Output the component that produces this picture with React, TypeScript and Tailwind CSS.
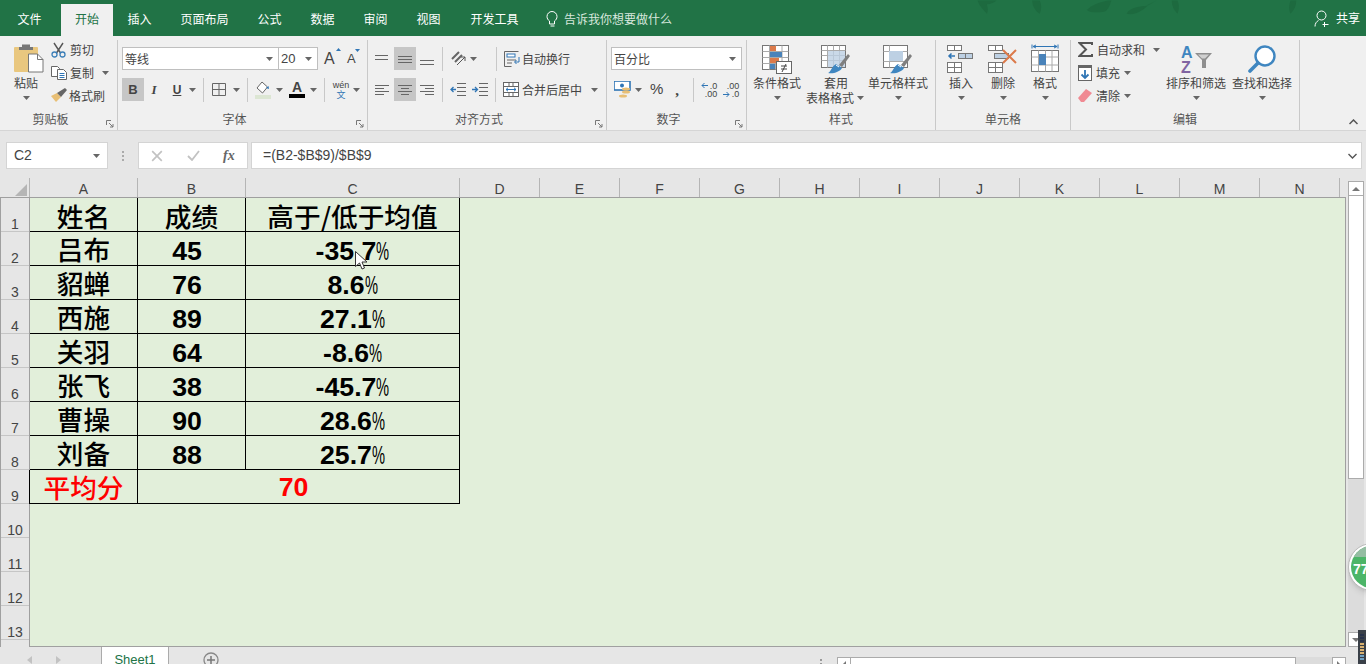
import type { ReactNode } from 'react';

const CJK = "font-['Noto_Sans_CJK_SC','Liberation_Sans',sans-serif]";

const Caret = ({ className = '' }: { className?: string }) => (
  <svg width="7" height="4" viewBox="0 0 7 4" className={className}>
    <path d="M0 0h7L3.5 4z" fill="#666" />
  </svg>
);

const VSep = ({ className = '' }: { className?: string }) => (
  <div className={`w-px h-[24px] bg-[#c8c8c8] ${className}`} />
);

const Lines = ({ rows, w = 14 }: { rows: number[][]; w?: number }) => (
  <svg width={w} height="14" viewBox={`0 0 ${w} 14`}>
    {rows.map((r, i) => (
      <path key={i} d={`M${r[0]} ${r[2]}H${r[1]}`} stroke="#666" strokeWidth="1" />
    ))}
  </svg>
);

function Group({ w, label, launcher, children }: { w: string; label: string; launcher?: boolean; children: ReactNode }) {
  return (
    <div className={`${w} relative shrink-0 h-[90px] border-r border-[#c9c9c9] flex flex-col`}>
      <div className="flex-1 min-h-0">{children}</div>
      <div className={`h-[16px] mb-[3px] text-center text-[12px] leading-[16px] text-[#555] ${launcher ? 'pr-[16px]' : ''}`}>{label}</div>
      {launcher && (
        <svg width="8" height="8" viewBox="0 0 8 8" className="absolute right-[3px] bottom-[2px]">
          <path d="M0.5 5V0.5H5M3 3l4 4M7 4v3H4" fill="none" stroke="#777" />
        </svg>
      )}
    </div>
  );
}

function BigButton({ lines, icon, className = '' }: { lines: string[]; icon: ReactNode; className?: string }) {
  return (
    <div className={`flex flex-col items-center shrink-0 ${className}`}>
      <div className="h-[32px] flex items-center justify-center">{icon}</div>
      <div className="text-[12px] leading-[15px] text-[#444] text-center whitespace-nowrap">
        {lines.map((l) => (
          <div key={l}>{l}</div>
        ))}
      </div>
      {lines.length === 1 && <Caret className="mt-[6px]" />}
    </div>
  );
}

const PasteIcon = () => (
  <svg width="30" height="32" viewBox="0 0 30 32">
    <rect x="0" y="4" width="24" height="25" rx="1" fill="#e9c77f" />
    <path d="M8 4V1.5h8V4h3v3H5V4z" fill="#777" />
    <path d="M14.5 11h9l5.5 5.5V29H14.5z" fill="#fff" stroke="#777" />
    <path d="M23.5 11v5.5H29" fill="none" stroke="#777" />
  </svg>
);

const ScissorsIcon = () => (
  <svg width="15" height="16" viewBox="0 0 15 16">
    <path d="M3 1l6.5 10M12 1L5.5 11" stroke="#555" strokeWidth="1.4" fill="none" />
    <circle cx="3.5" cy="12.5" r="2.5" fill="none" stroke="#3c7fb8" strokeWidth="1.3" />
    <circle cx="11.5" cy="12.5" r="2.5" fill="none" stroke="#3c7fb8" strokeWidth="1.3" />
  </svg>
);

const CopyIcon = () => (
  <svg width="16" height="14" viewBox="0 0 16 14">
    <path d="M.5.5h6l2 2v8H.5z" fill="#fff" stroke="#666" />
    <path d="M6.5 3.5h6l3 3v7h-9z" fill="#fff" stroke="#666" />
    <path d="M8.5 7.5h5M8.5 9.5h5M8.5 11.5h5" stroke="#2f75b5" />
  </svg>
);

const BrushIcon = () => (
  <svg width="17" height="15" viewBox="0 0 17 15">
    <path d="M0 8l5 6 5-5-4-4z" fill="#e8bf75" />
    <path d="M6 5l4 4 6-7-2-2z" fill="#666" />
  </svg>
);

const FillIcon = () => (
  <svg width="17" height="18" viewBox="0 0 17 18">
    <path d="M2 7l5-6 5.5 5-5 6z" fill="#fff" stroke="#666" />
    <path d="M11 7l2.5-2 .5 3z" fill="#2f75b5" />
    <rect x="0" y="14" width="16" height="4" fill="#dce6d3" />
  </svg>
);

const WrapIcon = () => (
  <svg width="16" height="16" viewBox="0 0 16 16">
    <path d="M.5.5h14M.5 15.5h7M.5.5v15" stroke="#666" fill="none" />
    <rect x="3" y="3" width="8" height="3" fill="#fff" stroke="#2f75b5" />
    <path d="M3 9h9M3 12h5" stroke="#666" />
    <path d="M15 6v5h-4M12.5 9l-2 2 2 2" stroke="#2f75b5" fill="none" />
  </svg>
);

const MergeIcon = () => (
  <svg width="16" height="15" viewBox="0 0 16 15">
    <rect x=".5" y=".5" width="15" height="14" fill="#fff" stroke="#666" />
    <path d="M.5 4.5h15M.5 10.5h15M6 .5v4M10 .5v4M6 10.5v4M10 10.5v4" stroke="#666" />
    <path d="M3 7.5h10M5 5.8L3 7.5l2 1.7M11 5.8l2 1.7-2 1.7" stroke="#2f75b5" fill="none" />
  </svg>
);

const OrientIcon = () => (
  <svg width="16" height="16" viewBox="0 0 16 16">
    <path d="M1 8l7-7M4 11l7-7" stroke="#666" strokeWidth="2" />
    <path d="M6 14l8-8M14 6v4M14 6h-4" stroke="#555" fill="none" />
  </svg>
);

const IndentIcon = ({ flip }: { flip?: boolean }) => (
  <svg width="16" height="13" viewBox="0 0 16 13">
    <path d="M7 .5h9M7 4.5h9M7 8.5h9M7 12.5h9" stroke="#666" />
    {flip ? (
      <path d="M0 6.5h5M3 4l2.5 2.5L3 9" stroke="#2f75b5" strokeWidth="1.3" fill="none" />
    ) : (
      <path d="M1 6.5h5M3.5 4L1 6.5 3.5 9" stroke="#2f75b5" strokeWidth="1.3" fill="none" />
    )}
  </svg>
);

const CurrencyIcon = () => (
  <svg width="17" height="17" viewBox="0 0 17 17">
    <rect x="0" y="0" width="16" height="9" fill="#fff" stroke="#2f75b5" strokeWidth="1.6" />
    <circle cx="8" cy="4.5" r="2" fill="#2f75b5" />
    <ellipse cx="12" cy="8" rx="4" ry="1.5" fill="#e8bf75" />
    <ellipse cx="12" cy="11" rx="4" ry="1.5" fill="#e8bf75" />
    <ellipse cx="9" cy="15" rx="4" ry="1.5" fill="#e8bf75" />
  </svg>
);

const DecimalIcon = ({ top, bottom, right }: { top: string; bottom: string; right?: boolean }) => (
  <div className="relative w-[16px] h-[16px] font-['Liberation_Sans'] text-[9px] leading-[8px] text-[#444]">
    <div className="text-right">{top}</div>
    <div className="text-right">{bottom}</div>
    <svg width="7" height="7" viewBox="0 0 7 7" className={`absolute left-0 ${right ? 'bottom-0' : 'top-0'}`}>
      {right ? (
        <path d="M0 3.5h6M3.5 1L6 3.5 3.5 6" stroke="#2f75b5" fill="none" />
      ) : (
        <path d="M1 3.5h6M3.5 1L1 3.5 3.5 6" stroke="#2f75b5" fill="none" />
      )}
    </svg>
  </div>
);

const CondIcon = () => (
  <svg width="30" height="29" viewBox="0 0 30 29">
    <rect x=".5" y=".5" width="26" height="24" fill="#fff" stroke="#777" />
    <path d="M7.5 .5v24M13.5 .5v24M20 .5v24M.5 6.5h26M.5 12.5h26M.5 18.5h26" stroke="#aaa" />
    <rect x="8" y="1" width="6" height="5" fill="#dc7a4a" />
    <rect x="8" y="7" width="12" height="5" fill="#4a83ba" />
    <rect x="8" y="13" width="9" height="5" fill="#dc7a4a" />
    <rect x="8" y="19" width="5" height="5" fill="#4a83ba" />
    <rect x="14.5" y="16.5" width="15" height="12" fill="#fff" stroke="#666" />
    <path d="M19 21h6M19 24h6M24 19l-4 8" stroke="#444" />
  </svg>
);

const TableIcon = ({ filled }: { filled?: boolean }) => (
  <svg width="30" height="29" viewBox="0 0 30 29">
    <rect x=".5" y=".5" width="24" height="22" fill="#fff" stroke="#777" />
    {filled ? (
      <>
        <path d="M.5 6.5h24M.5 16.5h24M6.5 .5v22" stroke="#aaa" />
        <rect x="6" y="6" width="14" height="10" fill="#bdd0e3" />
      </>
    ) : (
      <>
        <path d="M.5 5.5h24M.5 10.5h24M.5 15.5h24M6.5 .5v22M12.5 .5v22M18.5 .5v22" stroke="#aaa" />
        <rect x="7" y="6" width="17" height="16" fill="#bdd0e3" opacity=".8" />
      </>
    )}
    <path d="M18 20l9-11 2 2-8 11z" fill="#7f7f7f" />
    <path d="M7 28c3-1 3-6 8-9l6 4c-2 4-9 6-14 5z" fill="#3f86c0" />
    <path d="M15 20l3 2" stroke="#fff" />
  </svg>
);

const InsertIcon = () => (
  <svg width="28" height="28" viewBox="0 0 28 28">
    <rect x=".5" y=".5" width="14" height="5" fill="#fff" stroke="#777" />
    <path d="M7.5 .5v5" stroke="#777" />
    <path d="M8 11H2M4.5 8.5L2 11l2.5 2.5" stroke="#2f75b5" strokeWidth="1.5" fill="none" />
    <rect x="11.5" y="8.5" width="14" height="5" fill="#bdd0e3" stroke="#777" />
    <path d="M18.5 8.5v5" stroke="#777" />
    <rect x=".5" y="17.5" width="14" height="10" fill="#fff" stroke="#777" />
    <path d="M7.5 17.5v10M.5 22.5h14" stroke="#777" />
  </svg>
);

const DeleteIcon = () => (
  <svg width="30" height="28" viewBox="0 0 30 28">
    <rect x=".5" y=".5" width="14" height="5" fill="#fff" stroke="#777" />
    <path d="M7.5 .5v5" stroke="#777" />
    <rect x="6.5" y="8.5" width="14" height="5" fill="#bdd0e3" stroke="#777" />
    <rect x=".5" y="17.5" width="14" height="10" fill="#fff" stroke="#777" />
    <path d="M7.5 17.5v10M.5 22.5h14" stroke="#777" />
    <path d="M15 5l13 13M28 5L15 18" stroke="#dc7a4a" strokeWidth="2" />
  </svg>
);

const FormatIcon = () => (
  <svg width="28" height="31" viewBox="0 0 28 31">
    <path d="M1 .5v4M27 .5v4M2 2.5h24M5 1l-3 1.5L5 4M23 1l3 1.5L23 4" stroke="#2f75b5" fill="none" />
    <rect x=".5" y="6.5" width="27" height="21" fill="#fff" stroke="#777" />
    <path d="M7.5 6.5v21M14.5 6.5v21M21 6.5v21M.5 13h27M.5 21h27" stroke="#aaa" />
    <rect x="8" y="10" width="7" height="11" fill="#4a83ba" />
  </svg>
);

const SumIcon = () => (
  <svg width="15" height="15" viewBox="0 0 15 15">
    <path d="M14 3V1H1.5L8 7.5 1.5 14H14v-2" fill="none" stroke="#555" strokeWidth="2" />
  </svg>
);

const DownFillIcon = () => (
  <svg width="14" height="16" viewBox="0 0 14 16">
    <rect x=".5" y=".5" width="13" height="15" fill="#fff" stroke="#666" />
    <rect x="0" y="0" width="14" height="3" fill="#666" />
    <path d="M7 5v8M3.500 9.500L7 13l3.500-3.500" stroke="#2f75b5" strokeWidth="1.8" fill="none" />
  </svg>
);

const EraserIcon = () => (
  <svg width="14" height="13" viewBox="0 0 14 13">
    <path d="M0 9l8-9 6 4-8 9H3z" fill="#f08a93" />
  </svg>
);

const SortIcon = () => (
  <div className="relative w-[32px] h-[29px] font-['Liberation_Sans'] font-bold text-[16px] leading-[15px]">
    <div className="text-[#3f86c0] ml-[1px]">A</div>
    <div className="text-[#8064a2] ml-[1px]">Z</div>
    <svg width="17" height="15" viewBox="0 0 17 15" className="absolute right-0 top-[8px]">
      <path d="M0 0h17l-6 7v8H7V7z" fill="#8f8f8f" />
      <path d="M3 1.5h11l-4 4H7z" fill="#d0d0d0" />
    </svg>
  </div>
);

const SearchIcon = () => (
  <svg width="28" height="28" viewBox="0 0 28 28">
    <circle cx="17" cy="11" r="9.5" fill="#fff" stroke="#3f86c0" strokeWidth="2.4" />
    <path d="M10 18L2 26" stroke="#3f86c0" strokeWidth="3.6" strokeLinecap="round" />
  </svg>
);

const CursorIcon = () => (
  <svg width="13" height="20" viewBox="0 0 13 20" className="absolute left-[325px] top-[53px]">
    <path d="M.5.5v15l4-3.5 2.5 6 2.5-1-2.5-6h5z" fill="#fff" stroke="#333" />
  </svg>
);

const tabs = ['文件', '开始', '插入', '页面布局', '公式', '数据', '审阅', '视图', '开发工具'];
const tabWidths = ['w-[61px] pr-[2px]', 'w-[52px]', 'w-[53px]', 'w-[77px]', 'w-[53px]', 'w-[53px]', 'w-[53px]', 'w-[53px]', 'w-[79px]'];

const rows = [
  ['姓名', '成绩', '高于/低于均值'],
  ['吕布', '45', '-35.7'],
  ['貂蝉', '76', '8.6'],
  ['西施', '89', '27.1'],
  ['关羽', '64', '-8.6'],
  ['张飞', '38', '-45.7'],
  ['曹操', '90', '28.6'],
  ['刘备', '88', '25.7'],
];

const cols = ['D', 'E', 'F', 'G', 'H', 'I', 'J', 'K', 'L', 'M', 'N'];
const rowNums = [1, 2, 3, 4, 5, 6, 7, 8, 9, 10, 11, 12, 13];

function TitleBar() {
  return (
    <div className="relative h-[36px] bg-[#217346] flex items-end text-[12px] text-white overflow-hidden">
      <svg width="396" height="16" viewBox="0 0 420 16" className="absolute left-[970px] top-0">
        <g fill="#1d6a3f">
          <path d="M8 0c2 6 6 10 10 14 2-4 0-8 0-10 4 0 8-2 10-4z" />
          <path d="M66 0c0 6 4 12 8 14 2-4 2-10 0-14z" />
          <path d="M124 10c6-6 14-8 22-10h4c-2 6-4 11-8 12-8 1-14 1-18-2z" />
          <path d="M166 14c4-6 12-8 22-8-6 6-14 10-22 8zM186 6c4-1 8-4 12-6" />
          <path d="M214 0c0 6 2 10 6 14 2-4 2-10 0-14zM340 0c-2 5-2 10 0 14 4-4 6-8 6-14z" />
        </g>
      </svg>
      <div className="flex relative">
        {tabs.map((t, i) => (
          <div
            key={t}
            className={`${tabWidths[i]} h-[32px] text-center leading-[30px] ${i === 1 ? 'bg-[#f0f0f0] text-[#217346]' : ''}`}
          >
            {t}
          </div>
        ))}
      </div>
      <div className="relative flex items-center h-[32px] pb-[2px] ml-[12px] text-[#d7e7dd]">
        <svg width="13" height="16" viewBox="0 0 13 16" className="mr-[5px]">
          <path d="M3.500 10C2 9 1 7.500 1 5.500a5 5 0 0 1 10 0c0 2-1 3.500-2.500 4.500v3h-5zM4.500 15h4" fill="none" stroke="#fff" />
        </svg>
        告诉我你想要做什么
      </div>
      <div className="absolute right-[6px] top-[9px] flex items-center gap-[6px]">
        <svg width="16" height="17" viewBox="0 0 15 17">
          <circle cx="7" cy="5.500" r="4.500" fill="none" stroke="#fff" />
          <path d="M.5 16.500c0-3 1.500-5 3.500-6M10 12v5M8 14.500h6" fill="none" stroke="#fff" />
        </svg>
        共享
      </div>
    </div>
  );
}

function Ribbon() {
  return (
    <div className="relative h-[95px] bg-[#f0f0f0] border-b border-[#d5d5d5] flex pt-[4px] text-[12px] text-[#444]">
      <Group w="w-[118px]" label="剪贴板" launcher>
        <div className="flex">
          <BigButton lines={['粘贴']} icon={<div className="ml-[5px]"><PasteIcon /></div>} className="ml-[11px] w-[30px] pt-[3px]" />
          <div className="ml-[10px] flex flex-col -mt-[2px]">
            <div className="h-[23px] flex items-center gap-[4px]"><ScissorsIcon />剪切</div>
            <div className="h-[23px] flex items-center gap-[3px]"><CopyIcon />复制<Caret className="ml-[5px]" /></div>
            <div className="h-[23px] flex items-center gap-[1px]"><BrushIcon />格式刷</div>
          </div>
        </div>
      </Group>

      <Group w="w-[250px]" label="字体" launcher>
        <div className="pl-[4px] pt-[7px]">
          <div className="flex items-center h-[23px]">
            <div className="w-[157px] h-[23px] bg-white border border-[#bfbfbf] flex items-center justify-between pl-[2px] pr-[5px]">等线<Caret /></div>
            <div className="w-[40px] h-[23px] -ml-px bg-white border border-[#bfbfbf] flex items-center justify-between pl-[2px] pr-[5px]">
              <span className="font-['Liberation_Sans'] text-[13px]">20</span><Caret />
            </div>
            <div className="relative ml-[6px] w-[14px] font-['Liberation_Sans'] text-[16px]">A
              <svg width="5" height="3" viewBox="0 0 5 3" className="absolute right-[-3px] top-[1px]"><path d="M0 3h5L2.500 0z" fill="#2f75b5" /></svg>
            </div>
            <div className="relative ml-[9px] w-[10px] font-['Liberation_Sans'] text-[13px]">A
              <svg width="5" height="3" viewBox="0 0 5 3" className="absolute right-[-3px] top-0"><path d="M0 0h5L2.500 3z" fill="#2f75b5" /></svg>
            </div>
          </div>
          <div className="flex items-center h-[23px] mt-[8px] font-['Liberation_Sans']">
            <div className="w-[22px] h-[23px] bg-[#c6c6c6] flex items-center justify-center font-bold text-[13px]">B</div>
            <div className="w-[10px] ml-[5px] text-center italic text-[13px] font-['Liberation_Serif'] font-bold">I</div>
            <div className="w-[10px] ml-[13px] text-center underline font-bold text-[12px]">U</div>
            <Caret className="ml-[7px]" />
            <VSep className="ml-[7px]" />
            <svg width="14" height="13" viewBox="0 0 14 13" className="ml-[8px]"><path d="M.5.500h13v12H.5zM7 .5v12M.5 6.500h13" fill="none" stroke="#666" /></svg>
            <Caret className="ml-[7px]" />
            <VSep className="ml-[7px]" />
            <div className="ml-[7px]"><FillIcon /></div>
            <Caret className="ml-[4px]" />
            <div className="ml-[6px] w-[16px] flex flex-col items-center">
              <span className="font-bold text-[14px] leading-[13px]">A</span>
              <div className="w-[16px] h-[4px] bg-black" />
            </div>
            <Caret className="ml-[5px]" />
            <VSep className="ml-[7px]" />
            <div className="ml-[7px] w-[18px] text-center text-[9px] leading-[10px]">
              wén<div className={`${CJK} text-[#2f75b5]`}>文</div>
            </div>
            <Caret className="ml-[3px]" />
          </div>
        </div>
      </Group>

      <Group w="w-[239px]" label="对齐方式" launcher>
        <div className="pl-[7px] pt-[7px]">
          <div className="flex items-center h-[23px]">
            <Lines rows={[[0, 13, 3.5], [0, 13, 7.5]]} />
            <div className="ml-[5px] w-[22px] h-[23px] bg-[#c6c6c6] flex items-center justify-center"><Lines rows={[[0, 14, 4.5], [0, 14, 7.5], [0, 14, 10.5]]} /></div>
            <div className="ml-[4px]"><Lines rows={[[0, 14, 8.5], [0, 14, 12.5]]} /></div>
            <VSep className="ml-[8px]" />
            <div className="ml-[8px]"><OrientIcon /></div>
            <Caret className="ml-[3px]" />
            <VSep className="ml-[19px]" />
            <div className="ml-[7px]"><WrapIcon /></div>
            <span className="ml-[2px]">自动换行</span>
          </div>
          <div className="flex items-center h-[23px] mt-[8px]">
            <Lines rows={[[0, 14, 2.5], [0, 9, 5.5], [0, 14, 8.5], [0, 9, 11.5]]} />
            <div className="ml-[5px] w-[22px] h-[23px] bg-[#c6c6c6] flex items-center justify-center"><Lines rows={[[0, 14, 2.5], [3, 11, 5.5], [0, 14, 8.5], [3, 11, 11.5]]} /></div>
            <div className="ml-[4px]"><Lines rows={[[0, 14, 2.5], [5, 14, 5.5], [0, 14, 8.5], [5, 14, 11.5]]} /></div>
            <VSep className="ml-[8px]" />
            <div className="ml-[7px]"><IndentIcon /></div>
            <div className="ml-[6px]"><IndentIcon flip /></div>
            <VSep className="ml-[7px]" />
            <div className="ml-[7px]"><MergeIcon /></div>
            <span className="ml-[3px]">合并后居中</span>
            <Caret className="ml-[9px]" />
          </div>
        </div>
      </Group>

      <Group w="w-[140px]" label="数字" launcher>
        <div className="pl-[4px] pt-[7px]">
          <div className="w-[131px] h-[23px] bg-white border border-[#bfbfbf] flex items-center justify-between pl-[2px] pr-[5px]">百分比<Caret /></div>
          <div className="flex items-center h-[23px] mt-[8px] pl-[3px]">
            <CurrencyIcon />
            <Caret className="ml-[4px]" />
            <span className="ml-[8px] font-['Liberation_Sans'] text-[15px]">%</span>
            <span className="ml-[12px] w-[8px] font-['Liberation_Serif'] font-bold text-[15px] leading-[12px]">,</span>
            <VSep className="ml-[10px]" />
            <div className="ml-[7px]"><DecimalIcon top=".0" bottom=".00" /></div>
            <div className="ml-[6px]"><DecimalIcon top=".00" bottom=".0" right /></div>
          </div>
        </div>
      </Group>

      <Group w="w-[189px]" label="样式">
        <div className="flex pt-[3px]">
          <BigButton lines={['条件格式']} icon={<CondIcon />} className="ml-[6px] w-[48px]" />
          <div className="ml-[5px] w-[60px] flex flex-col items-center shrink-0">
            <div className="h-[32px] flex items-center justify-center"><TableIcon /></div>
            <div className="text-[12px] leading-[15px] text-[#444]">套用</div>
            <div className="self-start flex items-center gap-[3px] text-[12px] leading-[15px] text-[#444] whitespace-nowrap">表格格式<Caret /></div>
          </div>
          <BigButton lines={['单元格样式']} icon={<TableIcon filled />} className="ml-[2px] w-[60px]" />
        </div>
      </Group>

      <Group w="w-[135px]" label="单元格">
        <div className="flex pt-[3px] pl-[13px]">
          <BigButton lines={['插入']} icon={<InsertIcon />} className="w-[24px]" />
          <BigButton lines={['删除']} icon={<DeleteIcon />} className="w-[30px] ml-[15px]" />
          <BigButton lines={['格式']} icon={<FormatIcon />} className="w-[28px] ml-[13px]" />
        </div>
      </Group>

      <Group w="w-[229px]" label="编辑">
        <div className="flex pl-[7px]">
          <div className="flex flex-col -mt-[2px] w-[88px]">
            <div className="h-[23px] flex items-center gap-[4px]"><SumIcon />自动求和<Caret className="ml-[4px]" /></div>
            <div className="h-[23px] flex items-center gap-[4px]"><DownFillIcon />填充<Caret /></div>
            <div className="h-[23px] flex items-center gap-[4px]"><EraserIcon />清除<Caret /></div>
          </div>
          <BigButton lines={['排序和筛选']} icon={<SortIcon />} className="w-[60px] pt-[3px]" />
          <BigButton lines={['查找和选择']} icon={<SearchIcon />} className="w-[60px] ml-[6px] pt-[3px]" />
        </div>
      </Group>

      <svg width="9" height="6" viewBox="0 0 9 6" className="absolute left-[1349px] bottom-[5px]">
        <path d="M.5 5l4-4 4 4" fill="none" stroke="#555" strokeWidth="1.5" />
      </svg>
    </div>
  );
}

function FormulaBar() {
  return (
    <div className="h-[47px] bg-[#e6e6e6] flex items-center pl-[6px] pr-[4px] pt-[2px] font-['Liberation_Sans']">
      <div className="w-[102px] h-[27px] bg-white border border-[#d4d4d4] flex items-center justify-between pl-[7px] pr-[7px] text-[14px] text-[#444]">
        C2<Caret />
      </div>
      <div className="w-[30px] flex flex-col items-center gap-[2px]">
        <div className="w-[2px] h-[2px] bg-[#aaa]" />
        <div className="w-[2px] h-[2px] bg-[#aaa]" />
        <div className="w-[2px] h-[2px] bg-[#aaa]" />
      </div>
      <div className="w-[110px] h-[27px] bg-white border border-[#d4d4d4] flex items-center pl-[12px]">
        <svg width="12" height="12" viewBox="0 0 10 10"><path d="M1 1l8 8M9 1L1 9" stroke="#c2c2c2" strokeWidth="1.4" /></svg>
        <svg width="13" height="11" viewBox="0 0 13 11" className="ml-[24px]"><path d="M1 6l4 4 7-9" fill="none" stroke="#c2c2c2" strokeWidth="1.8" /></svg>
        <span className="ml-[23px] font-['Liberation_Serif'] italic font-bold text-[14px] text-[#666]">fx</span>
      </div>
      <div className="ml-[3px] flex-1 h-[27px] bg-white border border-[#d4d4d4] flex items-center justify-between pl-[11px] pr-[4px] text-[14px] text-[#444]">
        =(B2-$B$9)/$B$9
        <svg width="9" height="6" viewBox="0 0 9 6"><path d="M.5 1l4 4 4-4" fill="none" stroke="#555" strokeWidth="1.4" /></svg>
      </div>
    </div>
  );
}

function Sheet() {
  return (
    <div className="h-[469px] flex bg-[#e6e6e6] font-['Liberation_Sans']">
      <div className="w-[1346px] shrink-0 flex flex-col">
        <div className="h-[20px] flex border-b border-[#9f9f9f] text-[14px] text-[#444]">
          <div className="w-[30px] border-r border-[#b5b5b5] relative">
            <svg width="12" height="12" viewBox="0 0 12 12" className="absolute right-[2px] bottom-[1px]"><path d="M12 0v12H0z" fill="#b5b5b5" /></svg>
          </div>
          <div className="w-[108px] border-r border-[#b5b5b5] text-center leading-[22px]">A</div>
          <div className="w-[108px] border-r border-[#b5b5b5] text-center leading-[22px]">B</div>
          <div className="w-[214px] border-r border-[#b5b5b5] text-center leading-[22px]">C</div>
          {cols.map((c) => (
            <div key={c} className="w-[80px] border-r border-[#b5b5b5] text-center leading-[22px]">{c}</div>
          ))}
        </div>
        <div className="flex-1 min-h-0 flex overflow-hidden">
          <div className="w-[30px] shrink-0 border-r border-[#9f9f9f] border-l border-l-[#a0a0a0] text-[14px] text-[#444]">
            {rowNums.map((n) => (
              <div key={n} className="h-[34px] border-b border-[#c6c6c6] flex items-end justify-center leading-[14px]">{n}</div>
            ))}
          </div>
          <div className="relative flex-1 bg-[#e2efda] border-r border-b border-[#a0a0a0]">
            <div className="grid grid-cols-[108px_108px_214px] auto-rows-[34px] text-black font-bold text-[26.67px] leading-[28px]">
              {rows.map((r, i) => (
                <div key={r[0]} className="contents">
                  <div className={`${CJK} font-medium border-r border-b border-black flex items-center justify-center ${i === 0 ? 'pt-[3px]' : ''}`}>{r[0]}</div>
                  {i === 0 ? (
                    <div className={`${CJK} font-medium border-r border-b border-black flex items-center justify-center pt-[3px]`}>{r[1]}</div>
                  ) : (
                    <div className="border-r border-b border-black flex items-center justify-center pr-[9px] pt-[4px]">{r[1]}</div>
                  )}
                  {i === 0 ? (
                    <div className={`${CJK} font-medium border-r border-b border-black flex items-center justify-center pt-[3px]`}>{r[2]}</div>
                  ) : (
                    <div className="border-r border-b border-black flex items-center justify-center pt-[4px]">
                      {r[2]}
                      <span className="inline-block w-[13px] origin-left scale-x-[0.55] font-normal">%</span>
                    </div>
                  )}
                </div>
              ))}
              <div className={`${CJK} font-medium border-l border-r border-b border-black flex items-center justify-center text-[#ff0000] -ml-px`}>平均分</div>
              <div className="col-span-2 border-r border-b border-black flex items-center justify-center pr-[10px] text-[#ff0000]">70</div>
            </div>
            <CursorIcon />
          </div>
        </div>
      </div>
      <div className="w-[20px] flex flex-col items-center pt-[3px]">
        <div className="w-[16px] h-[15px] bg-white border border-[#ababab] flex items-center justify-center">
          <svg width="8" height="4" viewBox="0 0 8 4"><path d="M0 4h8L4 0z" fill="#777" /></svg>
        </div>
        <div className="w-[16px] h-[283px] bg-white border-x border-b border-[#ababab]" />
        <div className="w-[16px] h-[153px] bg-[#dcdcdc]" />
        <div className="w-[16px] h-[15px] bg-white border border-[#ababab] flex items-center justify-center">
          <svg width="8" height="4" viewBox="0 0 8 4"><path d="M0 0h8L4 4z" fill="#777" /></svg>
        </div>
      </div>
    </div>
  );
}

function StatusBar() {
  return (
    <div className="h-[17px] relative bg-[#e6e6e6] flex items-start overflow-hidden">
      <div className="w-[101px] flex gap-[24px] pl-[27px] pt-[9px]">
        <svg width="5" height="8" viewBox="0 0 5 8"><path d="M5 0v8L0 4z" fill="#c2c2c2" /></svg>
        <svg width="5" height="8" viewBox="0 0 5 8"><path d="M0 0v8l5-4z" fill="#c2c2c2" /></svg>
      </div>
      <div className="w-[68px] h-[17px] bg-white border-x border-[#ababab] text-center font-['Liberation_Sans'] text-[13px] leading-[25px] text-[#217346]">Sheet1</div>
      <svg width="16" height="16" viewBox="0 0 16 16" className="ml-[34px] mt-[5px]">
        <circle cx="8" cy="8" r="7" fill="none" stroke="#888" strokeWidth="1.3" />
        <path d="M4 8h8M8 4v8" stroke="#777" strokeWidth="1.5" />
      </svg>
      <div className="ml-[601px] mt-[12px] flex flex-col gap-[2px]">
        <div className="w-[2px] h-[2px] bg-[#999]" />
        <div className="w-[2px] h-[2px] bg-[#999]" />
      </div>
      <div className="ml-[15px] mt-[10px] flex h-[17px]">
        <div className="w-[14px] bg-white border border-[#ababab] flex justify-center pt-[3px]">
          <svg width="4" height="8" viewBox="0 0 4 8"><path d="M4 0v8L0 4z" fill="#777" /></svg>
        </div>
        <div className="w-[445px] bg-white border-y border-r border-[#ababab]" />
        <div className="w-[36px] bg-[#dcdcdc]" />
        <div className="w-[14px] bg-white border border-[#ababab] flex justify-center pt-[3px]">
          <svg width="4" height="8" viewBox="0 0 4 8"><path d="M0 0v8l4-4z" fill="#777" /></svg>
        </div>
      </div>
    </div>
  );
}

export default function App() {
  return (
    <div className={`relative w-[1366px] h-[664px] overflow-hidden bg-[#e6e6e6] ${CJK}`}>
      <TitleBar />
      <Ribbon />
      <FormulaBar />
      <Sheet />
      <StatusBar />
      {/* floating monitor ball and widget from the recording */}
      <div className="absolute left-[1348px] top-[543px] w-[48px] h-[48px] rounded-full bg-white border border-[#bbb] shadow-md p-[2px]">
        <div className="relative w-full h-full rounded-full bg-[#4cb568] overflow-hidden font-['Liberation_Sans'] font-bold text-[14px] text-white pl-[2px] pt-[13px]">
          <div className="absolute left-0 top-0 w-full h-[11px] bg-[#94bda2]" />
          <span className="relative">77</span>
        </div>
      </div>
      <div className="absolute left-[1358px] top-[630px] w-[8px] h-[34px] bg-[#3a4048] flex flex-col items-center gap-[1px] pt-[4px]">
        {['#28324a', '#28324a', '#28324a', '#d8b070', '#d8b070', '#d8b070', '#d8b070', '#6f9fc0', '#6f9fc0'].map((c, i) => (
          <div key={i} className="w-[4px] h-[2px]" style={{ backgroundColor: c }} />
        ))}
      </div>
    </div>
  );
}
